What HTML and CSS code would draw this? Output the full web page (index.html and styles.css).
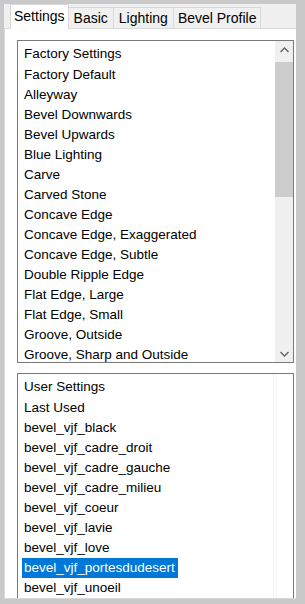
FILE: index.html
```html
<!doctype html>
<html lang="en">
  <head>
    <meta charset="UTF-8" />
    <title>Bevel Settings</title>
    <link rel="stylesheet" href="styles.css">
  </head>
  <body>
    <div class="window">
      <!-- Tab strip -->
      <div class="tabs">
        <div class="tab active">Settings</div>
        <div class="tab">Basic</div>
        <div class="tab">Lighting</div>
        <div class="tab">Bevel Profile</div>
      </div>

      <div class="page">
        <!-- Factory presets -->
        <div class="listbox factory">
          <ul class="items">
            <li class="head">Factory Settings</li>
            <li>Factory Default</li>
            <li>Alleyway</li>
            <li>Bevel Downwards</li>
            <li>Bevel Upwards</li>
            <li>Blue Lighting</li>
            <li>Carve</li>
            <li>Carved Stone</li>
            <li>Concave Edge</li>
            <li>Concave Edge, Exaggerated</li>
            <li>Concave Edge, Subtle</li>
            <li>Double Ripple Edge</li>
            <li>Flat Edge, Large</li>
            <li>Flat Edge, Small</li>
            <li>Groove, Outside</li>
            <li>Groove, Sharp and Outside</li>
          </ul>
          <div class="scrollbar">
            <div class="arrow">
              <svg width="9" height="6" viewBox="0 0 9 6"><path d="M0.5 5 L4.5 1 L8.5 5" fill="none" stroke="#606060" stroke-width="1.3"/></svg>
            </div>
            <div class="track">
              <div class="thumb"></div>
            </div>
            <div class="arrow">
              <svg width="9" height="6" viewBox="0 0 9 6"><path d="M0.5 1 L4.5 5 L8.5 1" fill="none" stroke="#606060" stroke-width="1.3"/></svg>
            </div>
          </div>
        </div>

        <!-- User presets -->
        <div class="listbox user">
          <ul class="items">
            <li class="head">User Settings</li>
            <li>Last Used</li>
            <li>bevel_vjf_black</li>
            <li>bevel_vjf_cadre_droit</li>
            <li>bevel_vjf_cadre_gauche</li>
            <li>bevel_vjf_cadre_milieu</li>
            <li>bevel_vjf_coeur</li>
            <li>bevel_vjf_lavie</li>
            <li>bevel_vjf_love</li>
            <li><span class="selected">bevel_vjf_portesdudesert</span></li>
            <li>bevel_vjf_unoeil</li>
          </ul>
          <div class="scrollbar idle"></div>
        </div>
      </div>
    </div>
  </body>
</html>
```

FILE: styles.css
```css
/* Dialog chrome colours */
:root {
  --frame: #c9c9c9;
  --face: #f0f0f0;
  --edge: #d9d9d9;
  --list-border: #7a7a7a;
  --thumb: #cdcdcd;
  --highlight: #0078d7;
}

body {
  margin: 0;
  height: 604px;
  overflow: hidden;
  background: var(--frame);
  font-family: "Liberation Sans", Arial, sans-serif;
  font-size: 13.5px;
  color: #000;
}

.window {
  margin: 4px 0 0 4px;
  width: 292px;
  height: 595px;
  background: var(--face);
  display: flex;
  flex-direction: column;
  overflow: hidden;
}

/* Tabs */
.tabs {
  display: flex;
  align-items: flex-end;
  height: 24px;
  padding-left: 6px;
  position: relative;
  z-index: 1;
  font-size: 14px;
}

.tab {
  height: 20px;
  line-height: 21px;
  padding: 0 5px 0 5px;
  border: 1px solid var(--edge);
  border-bottom: none;
  border-left: none;
  background: var(--face);
}

.tab:last-child {
  padding: 0 4px;
}

.tab.active {
  height: 24px;
  line-height: 22px;
  margin-bottom: -1px;
  padding: 0 3px;
  border-left: 1px solid var(--edge);
  background: #fff;
}

/* Page under the tabs */
.page {
  flex: 1;
  background: #fff;
  border: 1px solid var(--edge);
  border-right: none;
  padding: 11px 0 0 12px;
  display: flex;
  flex-direction: column;
  gap: 10px;
  overflow: hidden;
}

.listbox {
  width: 275px;
  border: 1px solid var(--list-border);
  background: #fff;
  display: flex;
  flex-shrink: 0;
  overflow: hidden;
}

.listbox.factory {
  height: 321px;
}

.listbox.user {
  height: 240px;
}

.items {
  list-style: none;
  margin: 0;
  padding: 1px 0 0 0;
  flex: 1;
}

.items li {
  height: 20px;
  line-height: 20px;
  padding-left: 6px;
  white-space: nowrap;
}

.items li.head {
  height: 23px;
  line-height: 23px;
}

.selected {
  display: inline-block;
  margin-left: -2px;
  padding: 0 3px 0 2px;
  background: var(--highlight);
  color: #fff;
}

/* Scrollbar */
.scrollbar {
  width: 18px;
  background: var(--face);
  display: flex;
  flex-direction: column;
}

.scrollbar.idle {
  background: #fff;
  border-left: 1px solid #f2f2f2;
  width: 2px;
  margin-right: 16px;
  border-right: 1px solid #f5f5f5;
}

.arrow {
  height: 17px;
  display: flex;
  align-items: center;
  justify-content: center;
}

.track {
  flex: 1;
  padding-top: 4px;
}

.thumb {
  height: 135px;
  background: var(--thumb);
}
```
